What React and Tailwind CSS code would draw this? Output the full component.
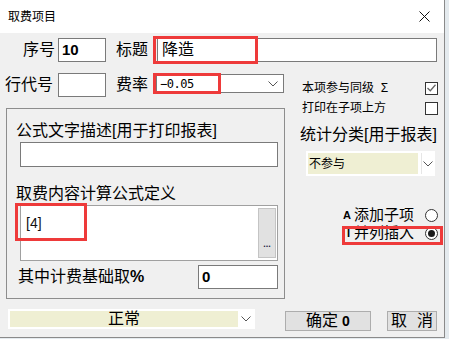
import React from 'react';

const cjk = "font-['Liberation_Sans','Noto_Sans_CJK_SC',sans-serif]";

function Chevron({ className = '' }) {
  return (
    <svg width="10" height="6" viewBox="0 0 10 6" className={className}>
      <polyline points="0.5,0.5 5,5 9.5,0.5" fill="none" stroke="#555" strokeWidth="1" />
    </svg>
  );
}

function Check() {
  return (
    <div className="w-[13px] h-[13px] border border-[#333] bg-white flex items-center justify-center">
      <svg width="9" height="8" viewBox="0 0 9 8">
        <polyline points="0.5,4 3.3,6.8 8.5,0.8" fill="none" stroke="#666" strokeWidth="1.3" />
      </svg>
    </div>
  );
}

function Radio({ on }) {
  return (
    <div className="w-[13px] h-[13px] rounded-full border border-[#333] bg-white flex items-center justify-center">
      {on && <div className="w-[7px] h-[7px] rounded-full bg-[#1a1a1a]" />}
    </div>
  );
}

export default function App() {
  return (
    <div className={`relative w-[449px] h-[339px] bg-[#e4eaee] overflow-hidden text-black ${cjk}`}>
      <div className="w-[445px] h-[338px] bg-[#f0f0f0] border-r border-b border-[#8a8a8a] flex flex-col">
        {/* title bar */}
        <div className="h-[33px] bg-white flex items-center justify-between pl-[8px] pr-[14px] shrink-0">
          <span className="text-[12px] leading-[14px] mt-[1px]">取费项目</span>
          <svg width="11" height="11" viewBox="0 0 11 11">
            <path d="M0.5 0.5 L10.5 10.5 M10.5 0.5 L0.5 10.5" stroke="#111" strokeWidth="1" />
          </svg>
        </div>

        {/* row 1 */}
        <div className="mt-[5px] h-[24px] flex items-center shrink-0">
          <div className="w-[58px] pr-[3px] text-right text-[16px] leading-[20px]">序号</div>
          <div className="w-[48px] h-[24px] bg-white border border-[#7a7a7a] flex items-center pl-[3px] text-[15px] font-bold">10</div>
          <div className="w-[51px] pr-[9px] text-right text-[16px] leading-[20px]">标题</div>
          <div className="w-[280px] h-[24px] bg-white border border-[#7a7a7a] flex items-center pl-[4px] text-[16px]">降造</div>
        </div>

        <div className="flex">
          {/* left column */}
          <div className="w-[285px] shrink-0 flex flex-col">
            <div className="mt-[11px] h-[24px] flex items-center">
              <div className="w-[58px] pr-[5px] text-right text-[16px] leading-[20px]">行代号</div>
              <div className="w-[48px] h-[24px] bg-white border border-[#7a7a7a]" />
              <div className="w-[50px] pr-[8px] text-right text-[16px] leading-[20px]">费率</div>
              <div className="self-start mt-[1px] w-[128px] h-[19px] bg-white border border-[#7a7a7a] flex items-center justify-between pl-[3px] pr-[5px]">
                <span className="text-[12px] leading-[14px] font-['DejaVu_Sans_Mono',monospace] tracking-[-0.5px]">−0.05</span>
                <Chevron />
              </div>
            </div>

            <div className="mt-[11px] ml-[6px] w-[279px] h-[191px] border border-[#8d8d8d] flex flex-col">
              <div className="mt-[12px] ml-[9px] h-[20px] text-[16px] leading-[20px]">公式文字描述[用于打印报表]</div>
              <div className="mt-[1px] ml-[13px] w-[258px] h-[25px] bg-white border border-[#7a7a7a]" />
              <div className="mt-[17px] ml-[9px] h-[20px] text-[16px] leading-[20px]">取费内容计算公式定义</div>
              <div className="mt-[1px] ml-[13px] w-[258px] h-[56px] bg-white border border-[#a0a0a0] flex justify-between">
                <span className="pl-[5px] pt-[8px] text-[14px] leading-[18px] text-[#111]">[4]</span>
                <div className="mt-[2px] mr-[1px] w-[18px] h-[50px] bg-[#e1e1e1] border border-[#c4c4c4] flex items-end justify-center pb-[9px]">
                  <span className="text-[9px] leading-[8px] font-bold text-[#224]">...</span>
                </div>
              </div>
              <div className="mt-[4px] h-[24px] flex items-center">
                <span className="ml-[11px] text-[16px] leading-[20px]">其中计费基础取<b>%</b></span>
                <div className="ml-auto mr-[6px] w-[80px] h-[24px] bg-white border border-[#7a7a7a] flex items-center pl-[3px] text-[15px] font-bold">0</div>
              </div>
            </div>
          </div>

          {/* right column */}
          <div className="flex-1 flex flex-col">
            <div className="mt-[16px] h-[20px] flex items-center pl-[17px] pr-[6px]">
              <span className="text-[12px] leading-[14px]">本项参与同级 &nbsp;Σ</span>
              <div className="ml-auto"><Check /></div>
            </div>
            <div className="h-[20px] flex items-center pl-[17px] pr-[6px]">
              <span className="text-[12px] leading-[14px]">打印在子项上方</span>
              <div className="ml-auto w-[13px] h-[13px] border border-[#333] bg-white" />
            </div>
            <div className="mt-[7px] pl-[15px] h-[20px] text-[16px] leading-[20px]">统计分类[用于报表]</div>
            <div className="mt-[6px] ml-[21px] w-[129px] h-[25px] bg-white p-[2px] flex">
              <div className="w-[110px] bg-[#efefd3] flex items-center pl-[1px] text-[12px] leading-[14px]">不参与</div>
              <div className="ml-[3px] border-l border-[#e6e6e6] flex-1 flex items-center justify-center">
                <Chevron />
              </div>
            </div>
            <div className="mt-[30px] h-[18px] flex items-center justify-end pr-[6px]">
              <span className="text-[11px] font-bold mr-[3px]">A</span>
              <span className="text-[15px] leading-[16px] mr-[11px]">添加子项</span>
              <Radio />
            </div>
            <div className="h-[18px] flex items-center justify-end pr-[6px]">
              <span className="text-[11px] font-bold mr-[4px]">I</span>
              <span className="text-[15px] leading-[16px] mr-[11px]">并列插入</span>
              <Radio on />
            </div>
          </div>
        </div>

        {/* bottom bar */}
        <div className="mt-[10px] h-[22px] flex items-start">
          <div className="ml-[8px] w-[247px] h-[20px] bg-white p-[2px] flex">
            <div className="w-[228px] bg-[#efefd3] flex items-center justify-center text-[16px] leading-[18px]">正常</div>
            <div className="flex-1 flex items-center justify-center">
              <Chevron />
            </div>
          </div>
          <div className="mt-[2px] ml-[30px] w-[86px] h-[20px] bg-[#e1e1e1] border border-[#adadad] flex items-center justify-center text-[16px] leading-[18px] whitespace-nowrap">
            确定 <span className="ml-[4px] font-bold text-[14px]">0</span>
          </div>
          <div className="mt-[2px] ml-[16px] w-[50px] h-[20px] bg-[#e1e1e1] border border-[#adadad] flex items-center justify-center gap-[10px] text-[16px] leading-[18px] whitespace-nowrap">
            <span>取</span>
            <span>消</span>
          </div>
        </div>
      </div>

      {/* red annotation boxes */}
      <div className="absolute left-[153px] top-[36px] w-[105px] h-[28px] border-[3px] border-[#ee3a3a]" />
      <div className="absolute left-[153px] top-[73px] w-[68px] h-[21px] border-[3px] border-[#ee3a3a]" />
      <div className="absolute left-[15px] top-[203px] w-[72px] h-[38px] border-[3px] border-[#ee3a3a]" />
      <div className="absolute left-[342px] top-[226px] w-[101px] h-[19px] border-[3px] border-[#ee3a3a]" />
    </div>
  );
}
